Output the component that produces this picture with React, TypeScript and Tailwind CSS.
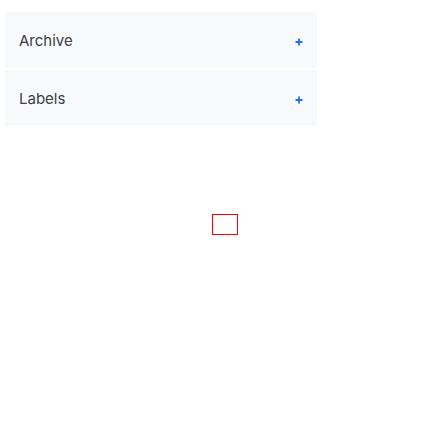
import React from "react";

const items = ["Archive", "Labels"];

export default function App() {
  return (
    <div className="relative w-[448px] h-[448px] bg-white" style={{ fontFamily: "Inter, 'Noto Sans', sans-serif" }}>
      <div className="flex flex-col gap-[2px] pt-[12px] pl-[5px] w-[317px]">
        {items.map((label) => (
          <div key={label} className="flex items-center justify-between h-[56px] bg-[#f8f9fa] pl-[14px] pr-[14px]">
            <span className="text-[15px] text-[#3c4043] mt-[2px]">{label}</span>
            <svg width="8" height="8" viewBox="0 0 8 8" className="mt-[3px]">
              <path d="M4 0.5v7M0.5 4h7" stroke="#1a73e8" strokeWidth="1.8" />
            </svg>
          </div>
        ))}
      </div>
      <div className="absolute left-[212px] top-[214px] w-[26px] h-[21px] border border-[#ff0000]" />
    </div>
  );
}
